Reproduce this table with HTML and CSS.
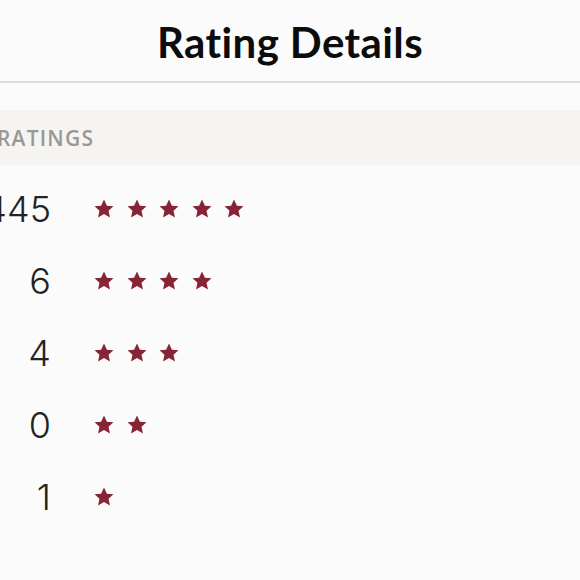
FILE: index.html
```html
<!DOCTYPE html>
<html>
<head>
<meta charset="utf-8">
<link rel="stylesheet" href="styles.css">
</head>
<body>
<header class="header"><h1 class="title">Rating Details</h1></header>
<section class="band"><span class="band-label">RATINGS</span></section>
<div class="rows">
  <div class="row"><span class="count">445</span><span class="stars">
    <svg class="star" viewBox="0 0 20 20"><path d="M10 0.6l2.9 6.1 6.6 0.6-5 4.5 1.5 6.6L10 15l-6 3.4 1.5-6.6-5-4.5 6.6-0.6z"/></svg>
    <svg class="star" viewBox="0 0 20 20"><path d="M10 0.6l2.9 6.1 6.6 0.6-5 4.5 1.5 6.6L10 15l-6 3.4 1.5-6.6-5-4.5 6.6-0.6z"/></svg>
    <svg class="star" viewBox="0 0 20 20"><path d="M10 0.6l2.9 6.1 6.6 0.6-5 4.5 1.5 6.6L10 15l-6 3.4 1.5-6.6-5-4.5 6.6-0.6z"/></svg>
    <svg class="star" viewBox="0 0 20 20"><path d="M10 0.6l2.9 6.1 6.6 0.6-5 4.5 1.5 6.6L10 15l-6 3.4 1.5-6.6-5-4.5 6.6-0.6z"/></svg>
    <svg class="star" viewBox="0 0 20 20"><path d="M10 0.6l2.9 6.1 6.6 0.6-5 4.5 1.5 6.6L10 15l-6 3.4 1.5-6.6-5-4.5 6.6-0.6z"/></svg>
  </span></div>
  <div class="row"><span class="count">6</span><span class="stars">
    <svg class="star" viewBox="0 0 20 20"><path d="M10 0.6l2.9 6.1 6.6 0.6-5 4.5 1.5 6.6L10 15l-6 3.4 1.5-6.6-5-4.5 6.6-0.6z"/></svg>
    <svg class="star" viewBox="0 0 20 20"><path d="M10 0.6l2.9 6.1 6.6 0.6-5 4.5 1.5 6.6L10 15l-6 3.4 1.5-6.6-5-4.5 6.6-0.6z"/></svg>
    <svg class="star" viewBox="0 0 20 20"><path d="M10 0.6l2.9 6.1 6.6 0.6-5 4.5 1.5 6.6L10 15l-6 3.4 1.5-6.6-5-4.5 6.6-0.6z"/></svg>
    <svg class="star" viewBox="0 0 20 20"><path d="M10 0.6l2.9 6.1 6.6 0.6-5 4.5 1.5 6.6L10 15l-6 3.4 1.5-6.6-5-4.5 6.6-0.6z"/></svg>
  </span></div>
  <div class="row"><span class="count">4</span><span class="stars">
    <svg class="star" viewBox="0 0 20 20"><path d="M10 0.6l2.9 6.1 6.6 0.6-5 4.5 1.5 6.6L10 15l-6 3.4 1.5-6.6-5-4.5 6.6-0.6z"/></svg>
    <svg class="star" viewBox="0 0 20 20"><path d="M10 0.6l2.9 6.1 6.6 0.6-5 4.5 1.5 6.6L10 15l-6 3.4 1.5-6.6-5-4.5 6.6-0.6z"/></svg>
    <svg class="star" viewBox="0 0 20 20"><path d="M10 0.6l2.9 6.1 6.6 0.6-5 4.5 1.5 6.6L10 15l-6 3.4 1.5-6.6-5-4.5 6.6-0.6z"/></svg>
  </span></div>
  <div class="row"><span class="count">0</span><span class="stars">
    <svg class="star" viewBox="0 0 20 20"><path d="M10 0.6l2.9 6.1 6.6 0.6-5 4.5 1.5 6.6L10 15l-6 3.4 1.5-6.6-5-4.5 6.6-0.6z"/></svg>
    <svg class="star" viewBox="0 0 20 20"><path d="M10 0.6l2.9 6.1 6.6 0.6-5 4.5 1.5 6.6L10 15l-6 3.4 1.5-6.6-5-4.5 6.6-0.6z"/></svg>
  </span></div>
  <div class="row"><span class="count">1</span><span class="stars">
    <svg class="star" viewBox="0 0 20 20"><path d="M10 0.6l2.9 6.1 6.6 0.6-5 4.5 1.5 6.6L10 15l-6 3.4 1.5-6.6-5-4.5 6.6-0.6z"/></svg>
  </span></div>
</div>
</body>
</html>
```
FILE: styles.css
```css
html, body {
  margin: 0;
  padding: 0;
  background: #fbfbfb;
  overflow: hidden;
}
body {
  font-family: Lato, "Open Sans", sans-serif;
  width: 580px;
  height: 580px;
}
.header {
  height: 81px;
  border-bottom: 2px solid #dcdcdc;
  display: flex;
  align-items: center;
  justify-content: center;
}
.title {
  margin: 0;
  font-size: 42px;
  font-weight: 700;
  color: #0c0c0c;
  letter-spacing: 0.4px;
  padding-top: 2px;
}
.band {
  margin-top: 27px;
  height: 55px;
  background: #f6f4f1;
  display: flex;
  align-items: center;
}
.band-label {
  margin-left: -3px;
  font-family: "Open Sans", Lato, sans-serif;
  font-size: 21px;
  font-weight: 600;
  letter-spacing: 1.2px;
  color: #9b9793;
}
.rows {
  padding-top: 8px;
  margin-left: -20px;
}
.row {
  height: 72px;
  display: grid;
  grid-template-columns: 71px auto;
  column-gap: 43px;
  align-items: center;
}
.count {
  text-align: right;
  font-family: Inter, "Open Sans", sans-serif;
  font-size: 36px;
  font-weight: 300;
  color: #232323;
  line-height: 1;
}
.stars {
  display: flex;
  gap: 12.5px;
  align-items: center;
}
.star {
  width: 20px;
  height: 20px;
  fill: #862334;
  display: block;
}
```
